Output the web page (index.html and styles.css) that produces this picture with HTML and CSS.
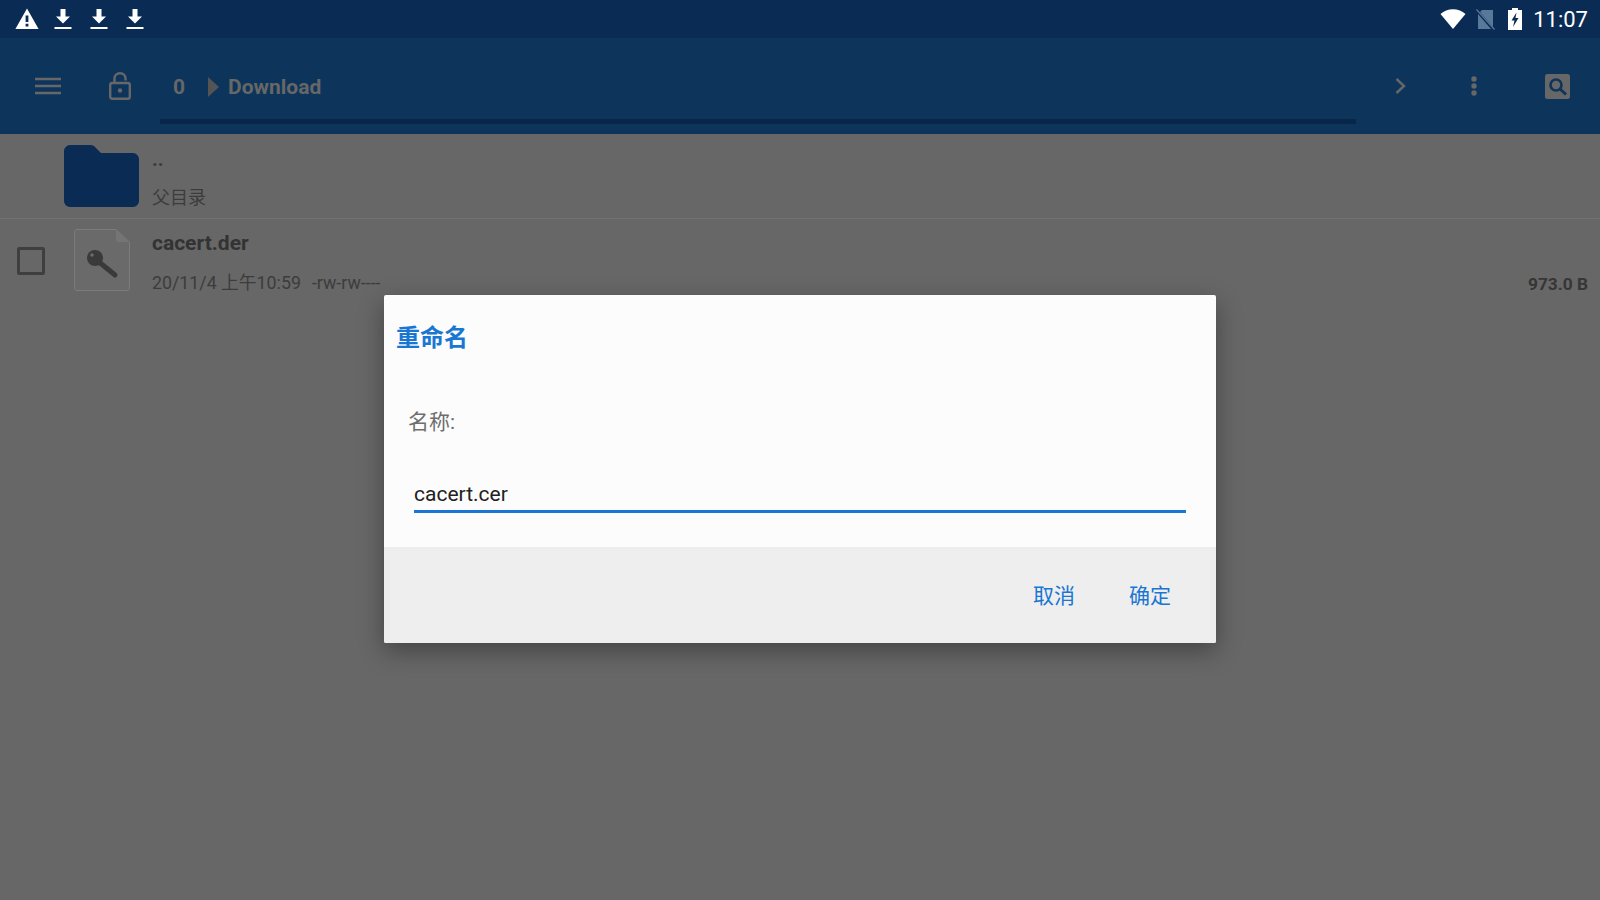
FILE: index.html
```html
<!DOCTYPE html>
<html lang="zh-CN">
<head>
    <meta charset="UTF-8">
    <meta name="viewport" content="width=device-width, initial-scale=1.0">
    <title>重命名</title>
    <link rel="stylesheet" href="styles.css">
</head>
<body>

    <!-- Status Bar -->
    <div class="statusbar">
        <div class="status-left">
            <svg class="warn-icon" viewBox="0 0 24 22"><path d="M12 0.5 L23.6 21 H0.4 Z M10.6 7.5 V14 H13.4 V7.5 Z M10.6 15.8 V18.6 H13.4 V15.8 Z" fill="#fff" fill-rule="evenodd"/></svg>
            <svg class="dl-icon" viewBox="0 0 18 22"><path d="M6.5 1 H11.5 V8.5 H16 L9 15.5 L2 8.5 H6.5 Z M0.5 19 H17.5 V21 H0.5 Z" fill="#fff"/></svg>
            <svg class="dl-icon" viewBox="0 0 18 22"><path d="M6.5 1 H11.5 V8.5 H16 L9 15.5 L2 8.5 H6.5 Z M0.5 19 H17.5 V21 H0.5 Z" fill="#fff"/></svg>
            <svg class="dl-icon" viewBox="0 0 18 22"><path d="M6.5 1 H11.5 V8.5 H16 L9 15.5 L2 8.5 H6.5 Z M0.5 19 H17.5 V21 H0.5 Z" fill="#fff"/></svg>
        </div>
        <div class="status-right">
            <svg class="wifi-icon" viewBox="0 0 26 20"><path d="M13 20 L0.5 5 C4 2 8 0.3 13 0.3 C18 0.3 22 2 25.5 5 Z" fill="#fff"/></svg>
            <svg class="sim-icon" viewBox="0 0 19 21"><path d="M6 1 H17 V18 L4 3 Z M2 5 L15 20 H2 Z" fill="#5a7899"/><path d="M0.5 0.5 L18.5 20.5" stroke="#5a7899" stroke-width="1.2"/></svg>
            <svg class="batt-icon" viewBox="0 0 14 22"><path d="M4 0 H10 V2 H14 V22 H0 V2 H4 Z M8.5 4.5 L3.5 12.5 H6.5 L5 19 L10.5 10 H7.5 Z" fill="#fff" fill-rule="evenodd"/></svg>
            <span class="clock">11:07</span>
        </div>
    </div>

    <!-- Toolbar -->
    <div class="toolbar">
        <svg class="menu-icon" viewBox="0 0 26 18"><path d="M0 2 H26 M0 9 H26 M0 16 H26" stroke="#676767" stroke-width="2.6"/></svg>
        <svg class="lock-icon" viewBox="0 0 22 28"><rect x="1.2" y="11" width="19.6" height="15.8" rx="2" fill="none" stroke="#676767" stroke-width="2.4"/><path d="M5.5 11 V6.5 C5.5 3 8 1.2 11 1.2 C14 1.2 16.5 3 16.5 6.5 V8.5" fill="none" stroke="#676767" stroke-width="2.4"/><circle cx="11" cy="18.5" r="2.2" fill="#676767"/></svg>
        <div class="crumbs">
            <span class="crumb-root">0</span>
            <span class="crumb-arrow"></span>
            <span class="crumb-name">Download</span>
            <div class="crumb-scroll"></div>
        </div>
        <svg class="chevron-icon" viewBox="0 0 11 16"><path d="M1.5 1 L9 8 L1.5 15" fill="none" stroke="#676767" stroke-width="2.4"/></svg>
        <svg class="dots-icon" viewBox="0 0 6 20"><circle cx="3" cy="3" r="2.7" fill="#676767"/><circle cx="3" cy="10" r="2.7" fill="#676767"/><circle cx="3" cy="17" r="2.7" fill="#676767"/></svg>
        <svg class="search-icon" viewBox="0 0 25 25"><rect width="25" height="25" rx="2.5" fill="#676767"/><circle cx="11" cy="11" r="5.5" fill="none" stroke="#0d355c" stroke-width="2.6"/><path d="M15 15 L21 20.5" stroke="#0d355c" stroke-width="3"/></svg>
    </div>

    <!-- File List -->
    <div class="filelist">
        <div class="row row-parent">
            <svg class="folder-icon" viewBox="0 0 75 62"><path d="M6 0 H27 C29 0 30 1 31 2 L37 8 H69 C72 8 75 11 75 14 V56 C75 59 72 62 69 62 H6 C3 62 0 59 0 56 V6 C0 3 3 0 6 0 Z" fill="#0a2c54"/></svg>
            <div class="row-text">
                <div class="parent-dots">..</div>
                <div class="parent-label">父目录</div>
            </div>
        </div>
        <div class="row row-file">
            <div class="checkbox"></div>
            <svg class="file-icon" viewBox="0 0 56 62"><path d="M3 0.5 H42 L55.5 13 V59 C55.5 60.5 54.5 61.5 53 61.5 H3 C1.5 61.5 0.5 60.5 0.5 59 V3 C0.5 1.5 1.5 0.5 3 0.5 Z" fill="#6a6a6a" stroke="#7b7b7b"/><path d="M42 1 L55 13 H44 C43 13 42 12 42 11 Z" fill="#757575"/><circle cx="21" cy="29" r="8" fill="#3a3a3a"/><path d="M25 33 L41 46" stroke="#3a3a3a" stroke-width="5" stroke-linecap="round"/><circle cx="18" cy="26" r="1.8" fill="#6a6a6a"/></svg>
            <div class="row-text">
                <div class="file-name">cacert.der</div>
                <div class="file-meta"><span>20/11/4 上午10:59</span><span>-rw-rw----</span></div>
            </div>
            <div class="file-size">973.0 B</div>
        </div>
    </div>

    <!-- Rename Dialog -->
    <div class="dialog">
        <div class="dialog-body">
            <div class="dialog-title">重命名</div>
            <div class="dialog-label">名称:</div>
            <div class="dialog-input">cacert.cer</div>
        </div>
        <div class="dialog-footer">
            <span class="dialog-btn">取消</span>
            <span class="dialog-btn">确定</span>
        </div>
    </div>

</body>
</html>
```

FILE: styles.css
```css
/* General Styles */
body {
    font-family: Roboto, "Noto Sans CJK SC", sans-serif;
    margin: 0;
    padding: 0;
    background-color: #676767;
    width: 1600px;
    height: 900px;
    overflow: hidden;
    position: relative;
}

svg {
    display: block;
    flex-shrink: 0;
}

/* Status Bar */
.statusbar {
    height: 38px;
    background: #0a2c54;
    display: flex;
    justify-content: space-between;
    align-items: center;
    padding: 0 12px 0 15px;
}

.status-left {
    display: flex;
    align-items: center;
}

.warn-icon {
    width: 24px;
    height: 22px;
    margin-right: 15px;
}

.dl-icon {
    width: 18px;
    height: 22px;
    margin-right: 18px;
}

.status-right {
    display: flex;
    align-items: center;
}

.wifi-icon {
    width: 26px;
    height: 20px;
    margin-right: 10px;
}

.sim-icon {
    width: 19px;
    height: 21px;
    margin-right: 13px;
}

.batt-icon {
    width: 14px;
    height: 22px;
    margin-right: 11px;
}

.clock {
    color: #fff;
    font-size: 22px;
}

/* Toolbar */
.toolbar {
    height: 96px;
    background: #0d355c;
    display: flex;
    align-items: center;
    padding: 0 30px 0 35px;
    box-sizing: border-box;
}

.menu-icon {
    width: 26px;
    height: 18px;
    margin-right: 48px;
}

.lock-icon {
    width: 22px;
    height: 28px;
    margin-right: 29px;
}

.crumbs {
    width: 1201px;
    align-self: stretch;
    display: flex;
    align-items: center;
    position: relative;
    color: #676767;
    font-size: 21px;
    font-weight: bold;
    margin-right: 39px;
    padding: 2px 0 0 13px;
    box-sizing: border-box;
}

.crumb-arrow {
    width: 0;
    height: 0;
    border-left: 11px solid #545454;
    border-top: 10px solid transparent;
    border-bottom: 10px solid transparent;
    margin: 0 9px 0 23px;
}

.crumb-scroll {
    position: absolute;
    left: 0;
    right: 0;
    bottom: 10px;
    height: 5px;
    background: #08264a;
}

.chevron-icon {
    width: 11px;
    height: 16px;
    margin-right: 65px;
}

.dots-icon {
    width: 6px;
    height: 20px;
    margin-right: 68px;
}

.search-icon {
    width: 25px;
    height: 25px;
}

/* File List */
.row {
    display: flex;
    box-sizing: border-box;
}

.row-parent {
    height: 85px;
    padding: 11px 0 0 64px;
    border-bottom: 1px solid #737373;
}

.folder-icon {
    width: 75px;
    height: 62px;
    margin-right: 13px;
}

.parent-dots {
    color: #3c3c3c;
    font-size: 20px;
    font-weight: bold;
    line-height: 24px;
    padding-top: 2px;
    height: 39px;
}

.parent-label {
    color: #3c3c3c;
    font-size: 18px;
    line-height: 24px;
}

.row-file {
    height: 88px;
    padding: 10px 12px 0 17px;
}

.checkbox {
    width: 22px;
    height: 22px;
    border: 3px solid #3f3f3f;
    border-radius: 2px;
    margin: 18px 29px 0 0;
    flex-shrink: 0;
}

.file-icon {
    width: 56px;
    height: 62px;
    margin-right: 22px;
}

.row-text {
    flex: 1;
}

.file-name {
    color: #333333;
    font-size: 21px;
    font-weight: bold;
    line-height: 28px;
}

.file-meta {
    color: #3c3c3c;
    font-size: 17.8px;
    line-height: 24px;
    margin-top: 14px;
    display: flex;
    gap: 11px;
}

.file-size {
    color: #363636;
    font-size: 17.3px;
    font-weight: bold;
    align-self: flex-end;
    line-height: 24px;
    margin-bottom: 11px;
}

/* Dialog */
.dialog {
    position: absolute;
    left: 384px;
    top: 295px;
    width: 832px;
    height: 348px;
    background: #fcfcfc;
    border-radius: 2px;
    box-shadow: 0 8px 24px rgba(0, 0, 0, 0.35);
    display: flex;
    flex-direction: column;
    overflow: hidden;
}

.dialog-body {
    height: 252px;
    padding: 0 30px 0 12px;
    box-sizing: border-box;
}

.dialog-title {
    color: #1976d2;
    font-size: 24px;
    font-weight: bold;
    line-height: 32px;
    padding-top: 27px;
}

.dialog-label {
    color: #6e6e6e;
    font-size: 21px;
    line-height: 28px;
    margin: 54px 0 0 12px;
}

.dialog-input {
    color: #212121;
    font-size: 21px;
    line-height: 30px;
    margin: 43px 0 0 18px;
    height: 31px;
    border-bottom: 3px solid #1976d2;
}

.dialog-footer {
    flex: 1;
    background: #eeeeee;
    display: flex;
    justify-content: flex-end;
    align-items: center;
    gap: 54px;
    padding: 0 45px 2px 0;
}

.dialog-btn {
    color: #1976d2;
    font-size: 21px;
}
```
